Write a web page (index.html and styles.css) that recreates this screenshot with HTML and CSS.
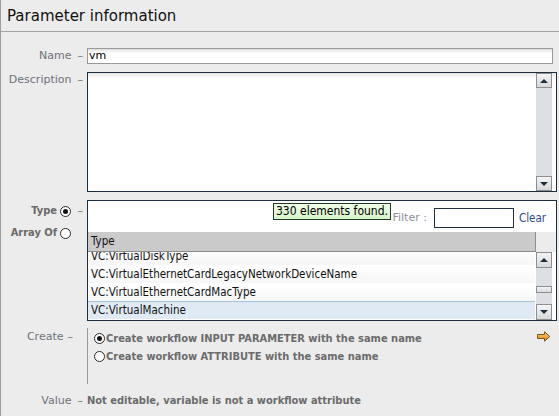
FILE: index.html
```html
<!DOCTYPE html>
<html>
<head>
<meta charset="utf-8">
<link rel="stylesheet" href="styles.css">
</head>
<body>
<div class="panel">
  <div class="header">Parameter information</div>

  <div class="row row-name">
    <div class="lbl">Name<span class="dash">–</span></div>
    <div class="input name-input">vm</div>
  </div>

  <div class="row row-desc">
    <div class="lbl lbl-desc">Description<span class="dash">–</span></div>
    <div class="textarea">
      <div class="ta-body"></div>
      <div class="vscroll">
        <div class="sbtn up"><span class="tri-up"></span></div>
        <div class="track"></div>
        <div class="sbtn down"><span class="tri-down"></span></div>
      </div>
    </div>
  </div>

  <div class="row row-type">
    <div class="lbl lbl-type">
      <div class="type-line"><b>Type</b><span class="radio checked"></span><span class="dash dash-type">–</span></div>
      <div class="type-line"><b>Array Of</b><span class="radio"></span><span class="dash dash-type hidden">–</span></div>
    </div>
    <div class="typebox">
      <div class="toolbar">
        <div class="tooltip">330 elements found.</div>
        <span class="filter-lbl">Filter :</span>
        <div class="filter-input"></div>
        <span class="clear">Clear</span>
      </div>
      <div class="thead">
        <div class="th">Type</div>
        <div class="th-corner"></div>
      </div>
      <div class="tbody">
        <div class="rows">
          <div class="tr clipped">VC:VirtualDiskType</div>
          <div class="tr">VC:VirtualEthernetCardLegacyNetworkDeviceName</div>
          <div class="tr">VC:VirtualEthernetCardMacType</div>
          <div class="tr selected">VC:VirtualMachine</div>
        </div>
        <div class="vscroll small">
          <div class="sbtn up"><span class="tri-up"></span></div>
          <div class="track"><div class="thumb"></div></div>
          <div class="sbtn down"><span class="tri-down"></span></div>
        </div>
      </div>
    </div>
  </div>

  <div class="row row-create">
    <div class="lbl lbl-create">Create<span class="dash">–</span></div>
    <div class="createbox">
      <div class="opts">
        <div class="opt"><span class="radio checked"></span>Create workflow INPUT PARAMETER with the same name</div>
        <div class="opt"><span class="radio"></span>Create workflow ATTRIBUTE with the same name</div>
      </div>
      <svg class="arrow" width="14" height="12" viewBox="0 0 14 12">
        <defs>
          <linearGradient id="ag" x1="0" y1="0" x2="0" y2="1">
            <stop offset="0" stop-color="#fbd89a"/>
            <stop offset="0.5" stop-color="#f2a84a"/>
            <stop offset="1" stop-color="#d98418"/>
          </linearGradient>
        </defs>
        <path d="M0.5 3.5 H7.5 V0.8 L12.8 5.5 L7.5 10.2 V7.5 H0.5 Z" fill="url(#ag)" stroke="#7a5810" stroke-width="1"/>
      </svg>
    </div>
  </div>

  <div class="row row-value">
    <div class="lbl">Value<span class="dash">–</span></div>
    <div class="value-text">Not editable, variable is not a workflow attribute</div>
  </div>
</div>
</body>
</html>
```

FILE: styles.css
```css
* { box-sizing: border-box; }

html, body {
  margin: 0;
  padding: 0;
}

body {
  width: 559px;
  height: 416px;
  overflow: hidden;
  background: #ececec;
  font-family: "DejaVu Sans", "Liberation Sans", sans-serif;
  color: #222;
}

.panel {
  height: 416px;
  border-left: 1px solid #9c9c9c;
}

.header {
  height: 32px;
  border-bottom: 1px solid #a3a3a3;
  padding-left: 6px;
  font-size: 15px;
  line-height: 32px;
  color: #111;
}

.row {
  display: flex;
  align-items: flex-start;
}

.lbl {
  width: 86px;
  flex: none;
  text-align: right;
  padding-right: 4px;
  font-size: 11px;
  line-height: 16px;
  color: #6d727a;
}

.dash {
  margin-left: 6px;
}

/* Name */
.row-name { margin-top: 16px; }

.input {
  height: 16px;
  border: 1px solid #9a9a9a;
  background: linear-gradient(#dedede, #ffffff 4px);
  font-size: 11px;
  line-height: 14px;
  padding-left: 1px;
  color: #000;
}

.name-input { width: 466px; }

/* Description */
.row-desc { margin-top: 8px; }

.textarea {
  width: 470px;
  height: 120px;
  border: 1px solid #1d2e3f;
  background: linear-gradient(#e6e6e6, #ffffff 6px);
  display: flex;
}

.ta-body { flex: 1; }

.vscroll {
  width: 16px;
  margin-right: 4px;
  background: #dcdfe3;
  display: flex;
  flex-direction: column;
}

.vscroll .track { flex: 1; position: relative; }

.sbtn {
  height: 15px;
  border: 1px solid #8d8f92;
  background: linear-gradient(#f4f4f4, #d6d8da);
  display: flex;
  align-items: center;
  justify-content: center;
}

.tri-up, .tri-down {
  width: 0;
  height: 0;
  border-left: 4px solid transparent;
  border-right: 4px solid transparent;
}

.tri-up { border-bottom: 4px solid #1d2e3f; }
.tri-down { border-top: 4px solid #1d2e3f; }

/* Type */
.row-type { margin-top: 8px; }

.lbl-type {
  padding-right: 4px;
  padding-top: 0;
  color: #6a6a6a;
}

.type-line {
  display: flex;
  align-items: center;
  justify-content: flex-end;
  height: 22px;
}

.type-line b {
  font-family: "DejaVu Sans Condensed", "DejaVu Sans", sans-serif;
  font-stretch: condensed;
  font-weight: bold;
  color: #6a6a6a;
}

.dash-type { margin-left: 6px; width: 6px; }
.hidden { visibility: hidden; }

.radio {
  width: 11px;
  height: 11px;
  border: 1px solid #2b2b2b;
  border-radius: 50%;
  background: #fff;
  display: inline-block;
  margin-left: 3px;
  position: relative;
  flex: none;
}

.radio.checked::after {
  content: "";
  position: absolute;
  left: 2px;
  top: 2px;
  width: 5px;
  height: 5px;
  border-radius: 50%;
  background: #111;
}

.typebox {
  width: 470px;
  height: 121px;
  border: 1px solid #1d2e3f;
  background: #fff;
  display: flex;
  flex-direction: column;
}

.toolbar {
  height: 31px;
  position: relative;
  display: flex;
  align-items: center;
  justify-content: flex-end;
  padding-right: 10px;
  padding-top: 2px;
}

.tooltip {
  position: absolute;
  left: 185px;
  top: 2px;
  height: 17px;
  padding: 0 2px;
  border: 1px solid #1f3a27;
  background: linear-gradient(#f0fde8, #d6f5c8);
  font-family: "DejaVu Sans Condensed", "DejaVu Sans", sans-serif;
  font-stretch: condensed;
  font-size: 12px;
  line-height: 15px;
  color: #000;
  white-space: nowrap;
}

.filter-lbl {
  font-size: 11px;
  color: #8e9299;
  margin-right: 7px;
}

.filter-input {
  width: 80px;
  height: 20px;
  border: 1px solid #1d2e3f;
  background: #fff;
}

.clear {
  margin-left: 5px;
  font-family: "DejaVu Sans Condensed", "DejaVu Sans", sans-serif;
  font-stretch: condensed;
  font-size: 11.5px;
  color: #2b4d8c;
}

.thead {
  height: 20px;
  display: flex;
}

.th {
  width: 448px;
  background: #cacaca;
  border-bottom: 1px solid #8c8c8c;
  border-right: 1px solid #8c8c8c;
  font-family: "DejaVu Sans Condensed", "DejaVu Sans", sans-serif;
  font-stretch: condensed;
  font-size: 11.5px;
  line-height: 19px;
  padding-left: 3px;
  color: #111;
}

.th-corner {
  flex: 1;
  background: #ececec;
}

.tbody {
  height: 68px;
  display: flex;
  overflow: hidden;
}

.rows {
  width: 448px;
  overflow: hidden;
}

.tr {
  height: 18px;
  font-family: "DejaVu Sans Condensed", "DejaVu Sans", sans-serif;
  font-stretch: condensed;
  font-size: 11.5px;
  line-height: 18px;
  padding-left: 3px;
  color: #111;
  background: linear-gradient(#ffffff, #f6f6f6);
}

.tr.clipped { margin-top: -5px; }

.tr.selected {
  background: #dfeaf5;
  border-top: 1px solid #a7c3dc;
  line-height: 17px;
}

.vscroll.small {
  margin-left: 1px;
  margin-right: 4px;
  width: 16px;
}

.vscroll.small .sbtn { height: 16px; }

.thumb {
  position: absolute;
  left: 0;
  right: 0;
  top: 18px;
  height: 7px;
  border: 1px solid #8d8f92;
  background: linear-gradient(#f4f4f4, #d6d8da);
}

/* Create */
.row-create { margin-top: 7px; }

.lbl-create {
  padding-right: 14px;
  padding-top: 1px;
}

.lbl-create .dash { margin-left: 4px; }

.createbox {
  width: 470px;
  height: 56px;
  border-left: 1px solid #9a9a9a;
  display: flex;
  justify-content: space-between;
  align-items: flex-start;
  padding-left: 6px;
  padding-right: 6px;
}

.opts { padding-top: 1px; }

.opt {
  display: flex;
  align-items: center;
  height: 18px;
  font-family: "DejaVu Sans Condensed", "DejaVu Sans", sans-serif;
  font-stretch: condensed;
  font-size: 11px;
  font-weight: bold;
  color: #6b6b6b;
  white-space: nowrap;
}

.opt .radio { margin-left: 0; margin-right: 1px; }

.arrow { margin-top: 3px; }

/* Value */
.row-value { margin-top: 9px; }

.value-text {
  font-family: "DejaVu Sans Condensed", "DejaVu Sans", sans-serif;
  font-stretch: condensed;
  font-size: 11px;
  line-height: 16px;
  font-weight: bold;
  color: #6b6b6b;
}
```
